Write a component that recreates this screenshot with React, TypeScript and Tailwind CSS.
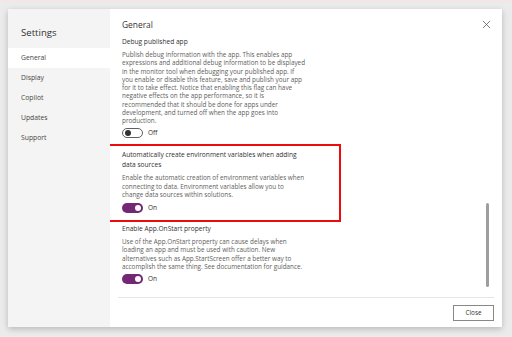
import React from "react";

const font = { fontFamily: '"Open Sans", "Noto Sans", sans-serif' };

function Toggle({ on }: { on: boolean }) {
  return (
    <div className="flex items-center gap-[5px]">
      {on ? (
        <div className="w-[21px] h-[10px] rounded-full bg-[#742774] flex items-center justify-end pr-[2px]">
          <div className="w-[6px] h-[6px] rounded-full bg-white" />
        </div>
      ) : (
        <div className="w-[21px] h-[10px] rounded-full border border-[#605e5c] flex items-center pl-[1.5px]">
          <div className="w-[6px] h-[6px] rounded-full bg-[#323130]" />
        </div>
      )}
      <span className="text-[6.5px] leading-[10px] text-[#323130]">{on ? "On" : "Off"}</span>
    </div>
  );
}

function Setting({
  title,
  lines,
  on,
  toggleGap,
}: {
  title: string[];
  lines: string[];
  on: boolean;
  toggleGap: string;
}) {
  return (
    <div>
      <div className="text-[6.6px] leading-[10px] font-medium text-[#323130]">
        {title.map((t, i) => (
          <div key={i} className="whitespace-nowrap">{t}</div>
        ))}
      </div>
      <div className="mt-[4px] text-[6.35px] leading-[8.25px] text-[#605e5c]">
        {lines.map((t, i) => (
          <div key={i} className="whitespace-nowrap">{t}</div>
        ))}
      </div>
      <div className={toggleGap}>
        <Toggle on={on} />
      </div>
    </div>
  );
}

export default function App() {
  const nav = ["General", "Display", "Copilot", "Updates", "Support"];
  return (
    <div className="w-[512px] h-[337px] bg-[#ebebeb] border-t-2 border-[#f3e6e6] pt-[7px] pl-[8px]" style={font}>
      <div className="w-[494px] h-[318px] flex bg-white shadow-[0_2px_6px_rgba(0,0,0,0.22)]">
        <div className="w-[102px] bg-[#f4f4f4] pt-[17px]">
          <div className="pl-[13px] text-[9.6px] leading-[14px] text-[#323130]">Settings</div>
          <div className="mt-[8px]">
            {nav.map((n, i) => (
              <div
                key={n}
                className={`h-[20px] pl-[13px] flex items-center text-[6.8px] text-[#484644] ${i === 0 ? "bg-white" : ""}`}
              >
                {n}
              </div>
            ))}
          </div>
        </div>
        <div className="flex-1 flex flex-col">
          <div className="h-[21px] pt-[11px] pl-[12px] pr-[11px] flex items-start justify-between">
            <div className="text-[8.4px] leading-[10px] font-medium text-[#323130]">General</div>
            <svg width="9" height="9" viewBox="0 0 10 10">
              <path d="M1 1 L9 9 M9 1 L1 9" stroke="#605e5c" strokeWidth="0.9" />
            </svg>
          </div>
          <div className="flex-1 flex overflow-hidden">
            <div className="flex-1 pt-[7px] pl-[12px]">
              <Setting
                title={["Debug published app"]}
                lines={[
                  "Publish debug information with the app. This enables app",
                  "expressions and additional debug information to be displayed",
                  "in the monitor tool when debugging your published app. If",
                  "you enable or disable this feature, save and publish your app",
                  "for it to take effect. Notice that enabling this flag can have",
                  "negative effects on the app performance, so it is",
                  "recommended that it should be done for apps under",
                  "development, and turned off when the app goes into",
                  "production.",
                ]}
                on={false}
                toggleGap="mt-[3px]"
              />
              <div className="relative mt-[12px]">
                <div className="absolute -top-[6px] -left-[21px] w-[240px] -bottom-[9px] border-2 border-[#ec0c0c]" />
                <Setting
                  title={["Automatically create environment variables when adding", "data sources"]}
                  lines={[
                    "Enable the automatic creation of environment variables when",
                    "connecting to data. Environment variables allow you to",
                    "change data sources within solutions.",
                  ]}
                  on={true}
                  toggleGap="mt-[4px]"
                />
              </div>
              <div className="mt-[11px]">
                <Setting
                  title={["Enable App.OnStart property"]}
                  lines={[
                    "Use of the App.OnStart property can cause delays when",
                    "loading an app and must be used with caution. New",
                    "alternatives such as App.StartScreen offer a better way to",
                    "accomplish the same thing. See documentation for guidance.",
                  ]}
                  on={true}
                  toggleGap="mt-[3px]"
                />
              </div>
            </div>
            <div className="w-[3px] mr-[13px] pt-[173px]">
              <div className="w-[3px] h-[84px] rounded-full bg-[#9e9e9e]" />
            </div>
          </div>
          <div className="mx-[8px] h-[30px] border-t border-[#e6e6e6] flex justify-end">
            <div className="mt-[7px] w-[41px] h-[16px] border border-[#8a8886] flex items-center justify-center text-[6.3px] text-[#323130]">
              Close
            </div>
          </div>
        </div>
      </div>
    </div>
  );
}
